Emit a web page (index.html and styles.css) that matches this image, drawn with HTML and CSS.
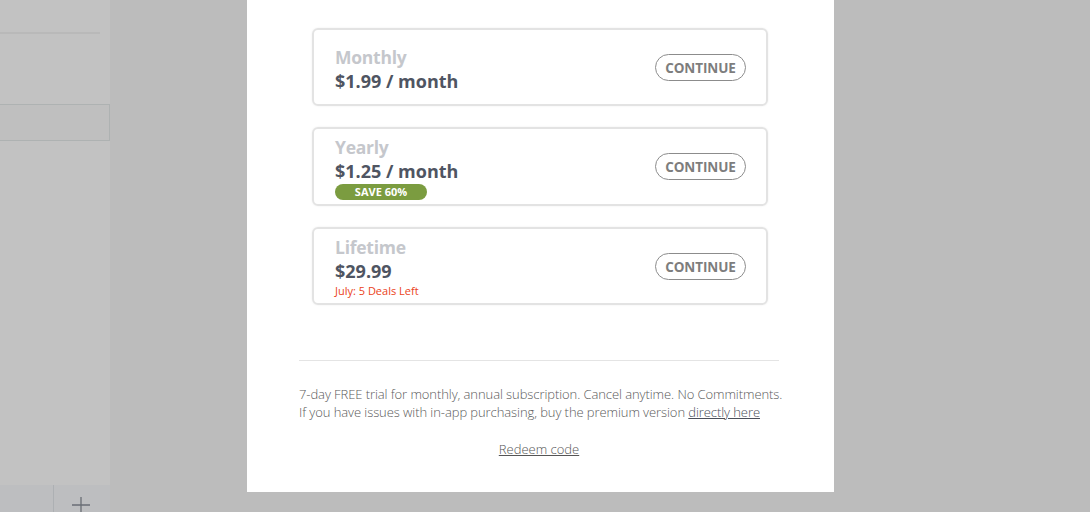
FILE: index.html
```html
<!DOCTYPE html>
<html>
<head>
<meta charset="utf-8">
<link rel="stylesheet" href="styles.css">
</head>
<body>
<div class="screen">
  <aside class="side">
    <div class="side-line"></div>
    <div class="side-box"></div>
    <div class="side-fill"></div>
    <div class="side-bottom">
      <div class="side-tab"></div>
      <div class="side-tab plus-tab">
        <svg class="plus" width="20" height="20" viewBox="0 0 20 20"><path d="M10 2v18M1 10h18" stroke="#6a6e75" stroke-width="1.3" fill="none"/></svg>
      </div>
    </div>
  </aside>
  <div class="overlay">
    <div class="modal">
      <div class="plans">
        <div class="card">
          <div class="info">
            <div class="title">Monthly</div>
            <div class="price">$1.99 / month</div>
          </div>
          <button class="cta">CONTINUE</button>
        </div>
        <div class="card">
          <div class="info">
            <div class="title">Yearly</div>
            <div class="price">$1.25 / month</div>
            <span class="badge">SAVE 60%</span>
          </div>
          <button class="cta">CONTINUE</button>
        </div>
        <div class="card">
          <div class="info">
            <div class="title">Lifetime</div>
            <div class="price">$29.99</div>
            <div class="deals">July: 5 Deals Left</div>
          </div>
          <button class="cta">CONTINUE</button>
        </div>
      </div>
      <div class="divider"></div>
      <p class="note">7-day FREE trial for monthly, annual subscription. Cancel anytime. No Commitments.<br>If you have issues with in-app purchasing, buy the premium version <a href="#">directly here</a></p>
      <div class="redeem"><a href="#">Redeem code</a></div>
    </div>
  </div>
</div>
</body>
</html>
```

FILE: styles.css
```css
* { box-sizing: border-box; }
html, body { margin: 0; padding: 0; }
body {
  width: 1090px;
  height: 512px;
  overflow: hidden;
  background: #bcbcbc;
  font-family: "Open Sans", "Noto Sans", sans-serif;
}
.screen {
  display: flex;
  width: 1090px;
  height: 512px;
}
.side {
  width: 110px;
  height: 512px;
  background: #c2c2c2;
  display: flex;
  flex-direction: column;
  flex-shrink: 0;
}
.side-line {
  margin-top: 32px;
  width: 100px;
  height: 2px;
  background: #b9b9b9;
}
.side-box {
  margin-top: 70px;
  height: 37px;
  border: 1px solid #aeb2b2;
  border-left: none;
  background: #bfbfbf;
}
.side-fill { flex: 1; }
.side-bottom {
  height: 27px;
  display: flex;
  background: #bdbec0;
}
.side-tab {
  width: 54px;
  border-right: 1px solid #adb0b3;
}
.plus-tab {
  flex: 1;
  border-right: none;
  display: flex;
  justify-content: center;
  padding-top: 10px;
  padding-right: 2px;
}
.overlay {
  flex: 1;
  padding-left: 137px;
}
.modal {
  width: 587px;
  height: 492px;
  background: #fff;
  padding: 28px 55px 0 52px;
}
.plans {
  padding: 0 11px 0 13px;
  display: flex;
  flex-direction: column;
  gap: 21px;
}
.card {
  display: flex;
  align-items: center;
  justify-content: space-between;
  height: 78px;
  border: 2px solid #e3e3e3;
  border-radius: 6px;
  box-shadow: 0 0 2px rgba(0,0,0,0.08);
  padding: 2px 20px 0 21px;
}
.card:first-child { padding-top: 4px; }
.card:first-child .cta { margin-top: -3px; }
.card:nth-child(2) { height: 79px; padding-top: 1px; }
.card:nth-child(2) .cta { margin-top: -1px; }
.card:nth-child(3) .cta { margin-top: -1px; }
.info {
  display: flex;
  flex-direction: column;
  align-items: flex-start;
}
.title {
  font-size: 17.5px;
  font-weight: 700;
  line-height: 24px;
  color: #c5c7cc;
  letter-spacing: -0.25px;
}
.price {
  font-size: 18px;
  font-weight: 700;
  line-height: 24px;
  color: #4f5562;
  letter-spacing: 0;
}
.badge {
  display: block;
  width: 92px;
  height: 16px;
  border-radius: 8px;
  background: #7b9c40;
  color: #fff;
  font-size: 11px;
  font-weight: 700;
  line-height: 16px;
  text-align: center;
  margin-top: 1px;
}
.deals {
  font-size: 11px;
  line-height: 16px;
  color: #eb4321;
}
.cta {
  width: 91px;
  height: 27px;
  border: 1px solid #8c8c8c;
  border-radius: 14px;
  background: #fff;
  color: #7d7d7d;
  font-family: "Open Sans", "Noto Sans", sans-serif;
  font-weight: 700;
  font-size: 13.5px;
  padding: 0;
  letter-spacing: -0.1px;
}
.divider {
  margin-top: 55px;
  height: 1px;
  background: #e4e4e4;
}
.note {
  margin: 24px 0 0;
  font-size: 13px;
  line-height: 18px;
  color: #5a5a5a;
  font-weight: 300;
  white-space: nowrap;
  letter-spacing: -0.08px;
}
.note a, .redeem a {
  color: #4a4f5a;
  text-decoration: underline;
}
.redeem {
  margin-top: 19px;
  text-align: center;
  font-size: 13px;
  line-height: 18px;
  font-weight: 300;
}
.redeem a { color: #555; }
```
